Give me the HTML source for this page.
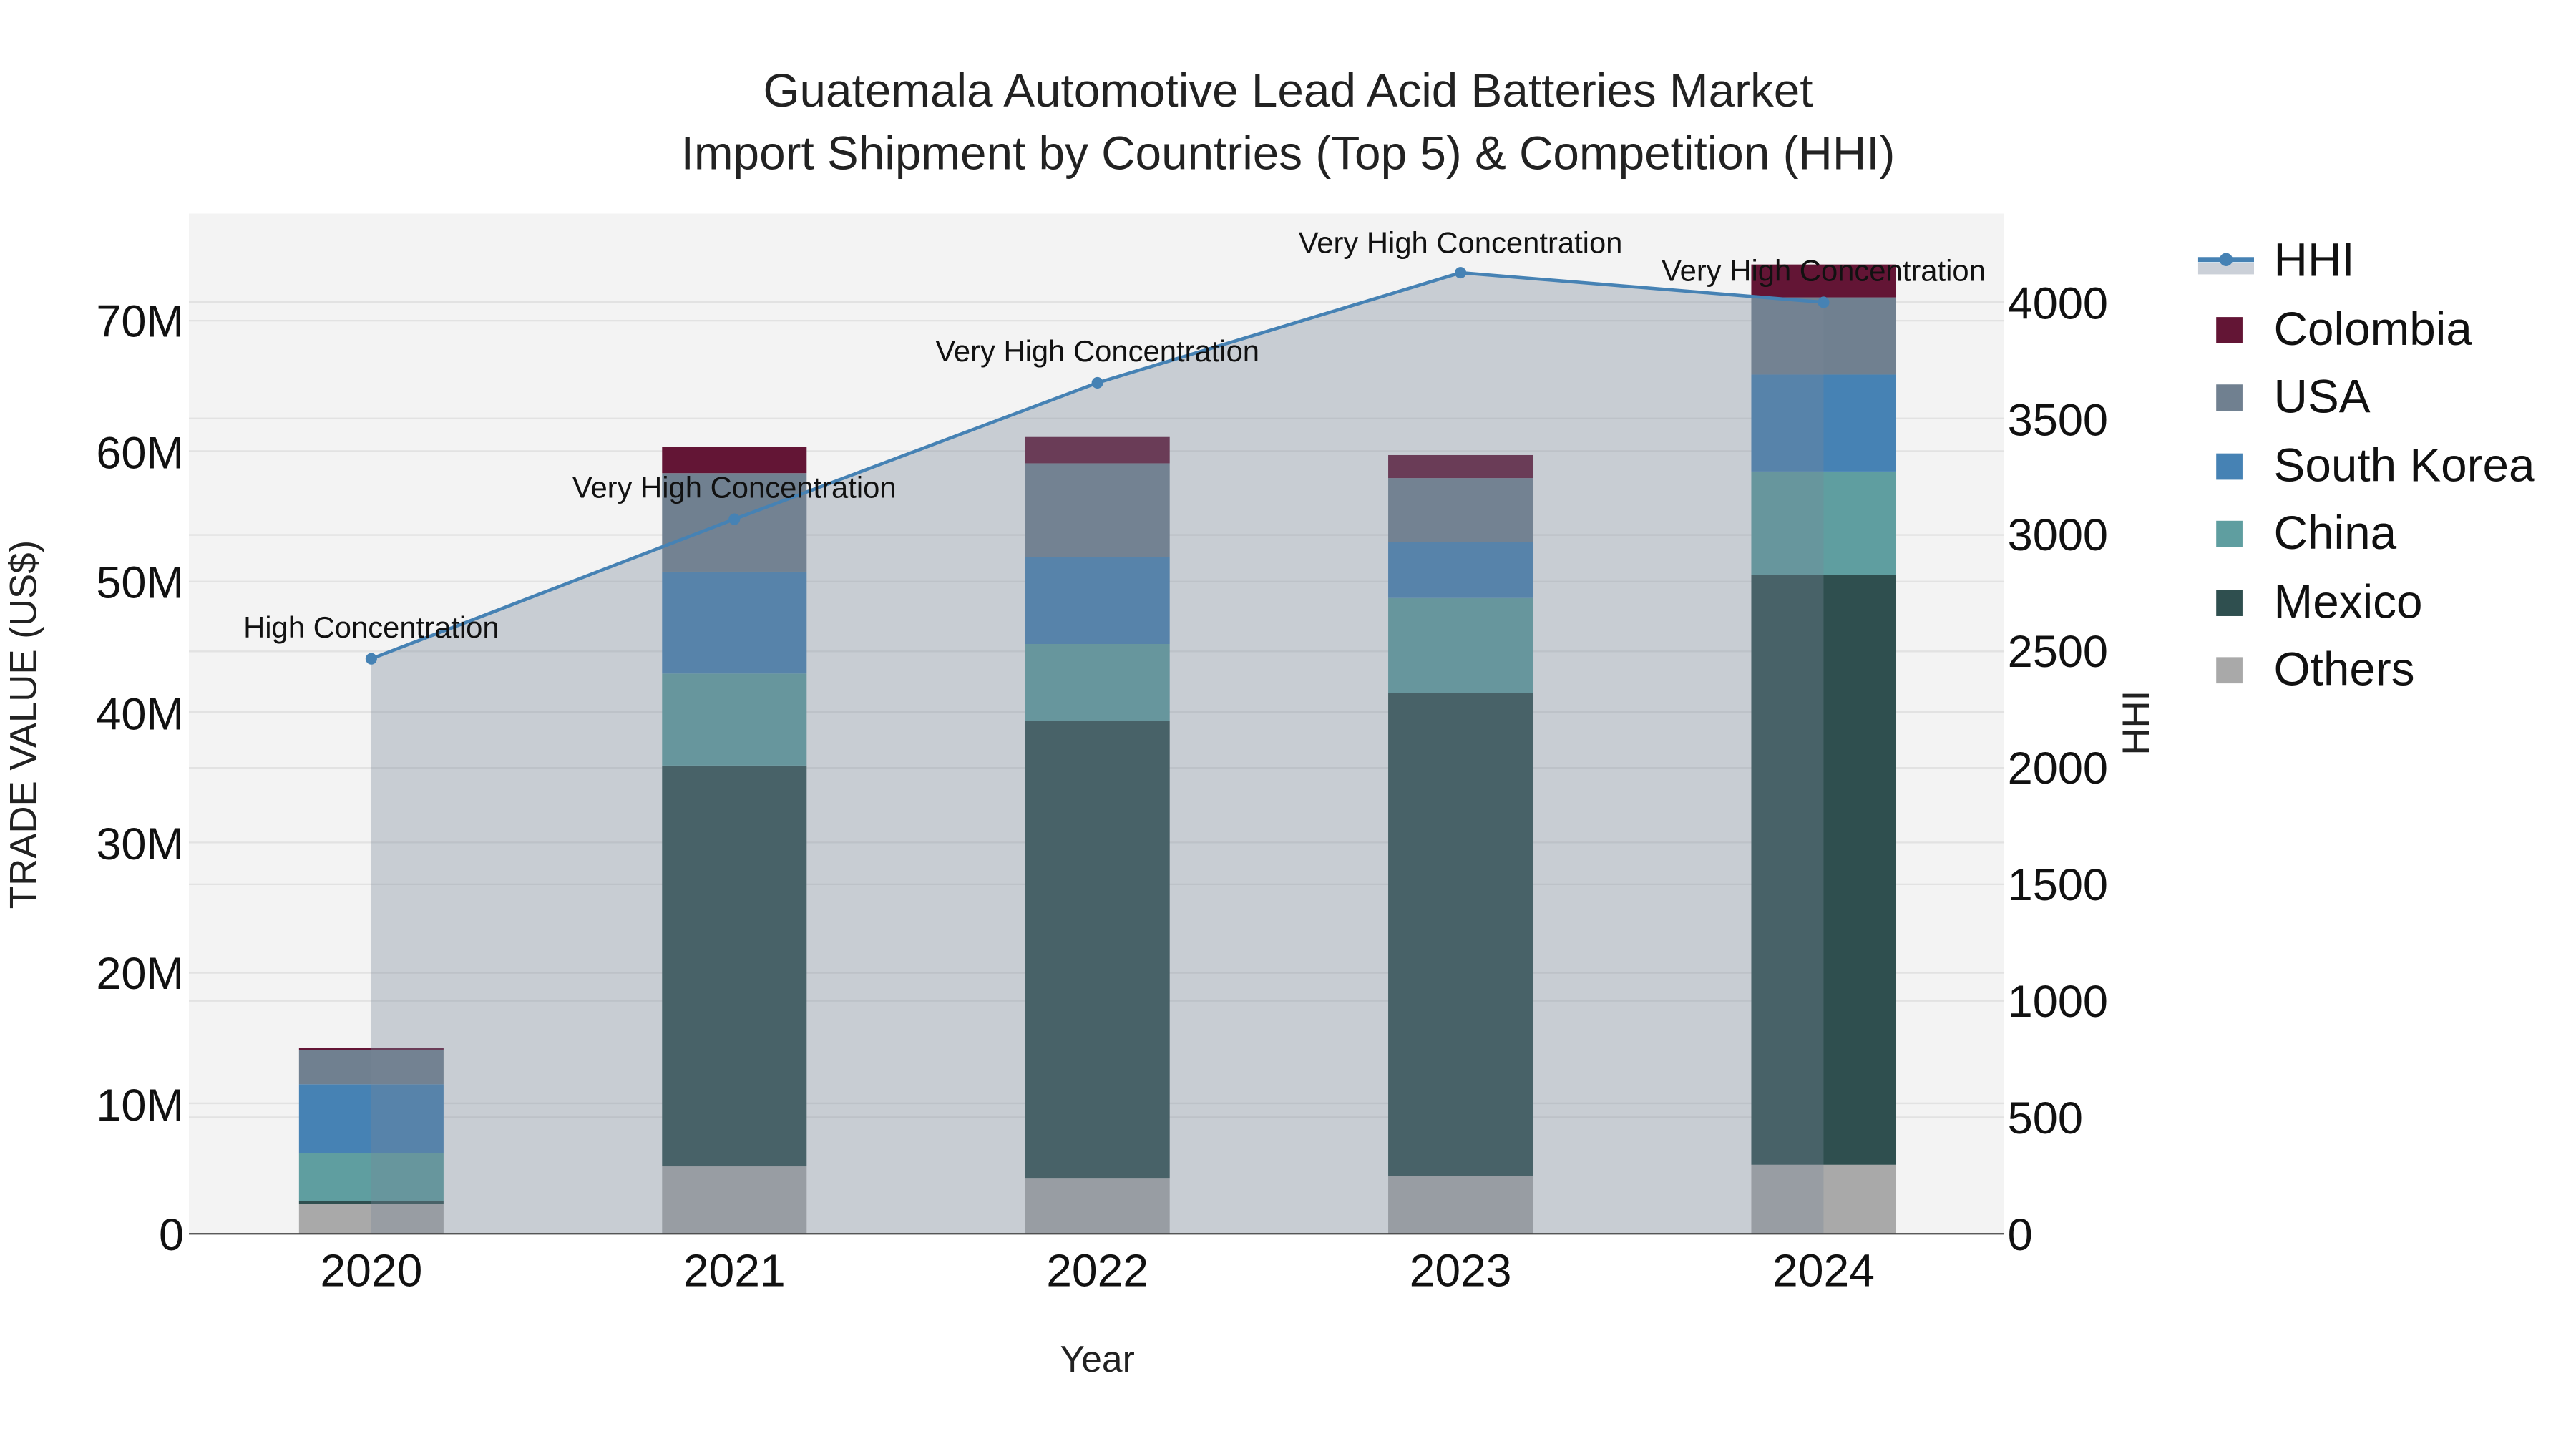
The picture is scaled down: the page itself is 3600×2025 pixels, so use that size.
<!DOCTYPE html>
<html><head><style>html,body{margin:0;padding:0;background:#fff}svg{display:block}</style></head><body>
<svg width="3600" height="2025" viewBox="0 0 1568 882" xmlns="http://www.w3.org/2000/svg" font-family="Liberation Sans, sans-serif">
<rect width="1568" height="882" fill="#fff"/>
<rect x="115" y="130" width="1105" height="621" fill="#f3f3f3"/>
<g stroke="#e2e2e2" stroke-width="1">
<line x1="115" x2="1220" y1="671.6" y2="671.6"/><line x1="115" x2="1220" y1="592.2" y2="592.2"/><line x1="115" x2="1220" y1="512.8" y2="512.8"/><line x1="115" x2="1220" y1="433.4" y2="433.4"/><line x1="115" x2="1220" y1="354" y2="354"/><line x1="115" x2="1220" y1="274.6" y2="274.6"/><line x1="115" x2="1220" y1="195.2" y2="195.2"/>
<line x1="115" x2="1220" y1="680.1" y2="680.1"/><line x1="115" x2="1220" y1="609.2" y2="609.2"/><line x1="115" x2="1220" y1="538.3" y2="538.3"/><line x1="115" x2="1220" y1="467.4" y2="467.4"/><line x1="115" x2="1220" y1="396.5" y2="396.5"/><line x1="115" x2="1220" y1="325.6" y2="325.6"/><line x1="115" x2="1220" y1="254.7" y2="254.7"/><line x1="115" x2="1220" y1="183.8" y2="183.8"/>
</g>
<g>
<rect x="182" y="733" width="88" height="18" fill="#a9a9a9"/><rect x="182" y="731" width="88" height="2" fill="#2f4f4f"/><rect x="182" y="702" width="88" height="29" fill="#5f9ea0"/><rect x="182" y="660" width="88" height="42" fill="#4682b4"/><rect x="182" y="639" width="88" height="21" fill="#708090"/><rect x="182" y="638" width="88" height="1" fill="#631535"/>
<rect x="403" y="710" width="88" height="41" fill="#a9a9a9"/><rect x="403" y="466" width="88" height="244" fill="#2f4f4f"/><rect x="403" y="410" width="88" height="56" fill="#5f9ea0"/><rect x="403" y="348" width="88" height="62" fill="#4682b4"/><rect x="403" y="288" width="88" height="60" fill="#708090"/><rect x="403" y="272" width="88" height="16" fill="#631535"/>
<rect x="624" y="717" width="88" height="34" fill="#a9a9a9"/><rect x="624" y="439" width="88" height="278" fill="#2f4f4f"/><rect x="624" y="392" width="88" height="47" fill="#5f9ea0"/><rect x="624" y="339" width="88" height="53" fill="#4682b4"/><rect x="624" y="282" width="88" height="57" fill="#708090"/><rect x="624" y="266" width="88" height="16" fill="#631535"/>
<rect x="845" y="716" width="88" height="35" fill="#a9a9a9"/><rect x="845" y="422" width="88" height="294" fill="#2f4f4f"/><rect x="845" y="364" width="88" height="58" fill="#5f9ea0"/><rect x="845" y="330" width="88" height="34" fill="#4682b4"/><rect x="845" y="291" width="88" height="39" fill="#708090"/><rect x="845" y="277" width="88" height="14" fill="#631535"/>
<rect x="1066" y="709" width="88" height="42" fill="#a9a9a9"/><rect x="1066" y="350" width="88" height="359" fill="#2f4f4f"/><rect x="1066" y="287" width="88" height="63" fill="#5f9ea0"/><rect x="1066" y="228" width="88" height="59" fill="#4682b4"/><rect x="1066" y="181" width="88" height="47" fill="#708090"/><rect x="1066" y="161" width="88" height="20" fill="#631535"/>
</g>
<polygon points="226,751 226,401 447,316 668,233 889,166 1110,184 1110,751" fill="rgba(119,136,153,0.35)"/>
<line x1="115" x2="1220" y1="751" y2="751" stroke="#444" stroke-width="1"/>
<polyline points="226,401 447,316 668,233 889,166 1110,184" fill="none" stroke="#4682b4" stroke-width="2"/>
<g fill="#4682b4"><circle cx="226" cy="401" r="3.5"/><circle cx="447" cy="316" r="3.5"/><circle cx="668" cy="233" r="3.5"/><circle cx="889" cy="166" r="3.5"/><circle cx="1110" cy="184" r="3.5"/></g>
<g font-size="18.2" fill="#111" text-anchor="middle">
<text x="226" y="388">High Concentration</text><text x="447" y="303">Very High Concentration</text><text x="668" y="220">Very High Concentration</text><text x="889" y="154">Very High Concentration</text><text x="1110" y="171">Very High Concentration</text>
</g>
<g font-size="27.5" fill="#111" text-anchor="end">
<text x="112" y="761">0</text><text x="112" y="682">10M</text><text x="112" y="602">20M</text><text x="112" y="523">30M</text><text x="112" y="444">40M</text><text x="112" y="364">50M</text><text x="112" y="285">60M</text><text x="112" y="205">70M</text>
</g>
<g font-size="27.5" fill="#111" text-anchor="start">
<text x="1222" y="761">0</text><text x="1222" y="690">500</text><text x="1222" y="619">1000</text><text x="1222" y="548">1500</text><text x="1222" y="477">2000</text><text x="1222" y="406">2500</text><text x="1222" y="335">3000</text><text x="1222" y="265">3500</text><text x="1222" y="194">4000</text>
</g>
<g font-size="28" fill="#111" text-anchor="middle">
<text x="226" y="783">2020</text><text x="447" y="783">2021</text><text x="668" y="783">2022</text><text x="889" y="783">2023</text><text x="1110" y="783">2024</text>
</g>
<text x="668" y="835" font-size="22.5" fill="#222" text-anchor="middle">Year</text>
<text transform="translate(22,441) rotate(-90)" font-size="23" fill="#222" text-anchor="middle">TRADE VALUE (US$)</text>
<text transform="translate(1308,440) rotate(-90)" font-size="23" fill="#222" text-anchor="middle">HHI</text>
<g font-size="28.6" fill="#222" text-anchor="middle">
<text x="784" y="65">Guatemala Automotive Lead Acid Batteries Market</text>
<text x="784" y="103">Import Shipment by Countries (Top 5) &amp; Competition (HHI)</text>
</g>
<rect x="1338" y="160" width="34" height="7" fill="#cbd0d8"/>
<line x1="1338" x2="1372" y1="158" y2="158" stroke="#4682b4" stroke-width="3"/>
<circle cx="1355" cy="158" r="4" fill="#4682b4"/>
<rect x="1349" y="193" width="16" height="16" fill="#631535"/>
<rect x="1349" y="234" width="16" height="16" fill="#708090"/>
<rect x="1349" y="276" width="16" height="16" fill="#4682b4"/>
<rect x="1349" y="317" width="16" height="16" fill="#5f9ea0"/>
<rect x="1349" y="359" width="16" height="16" fill="#2f4f4f"/>
<rect x="1349" y="400" width="16" height="16" fill="#a9a9a9"/>
<g font-size="28.6" fill="#111">
<text x="1384" y="168">HHI</text><text x="1384" y="210">Colombia</text><text x="1384" y="251">USA</text><text x="1384" y="293">South Korea</text><text x="1384" y="334">China</text><text x="1384" y="376">Mexico</text><text x="1384" y="417">Others</text>
</g>
</svg>
</body></html>
